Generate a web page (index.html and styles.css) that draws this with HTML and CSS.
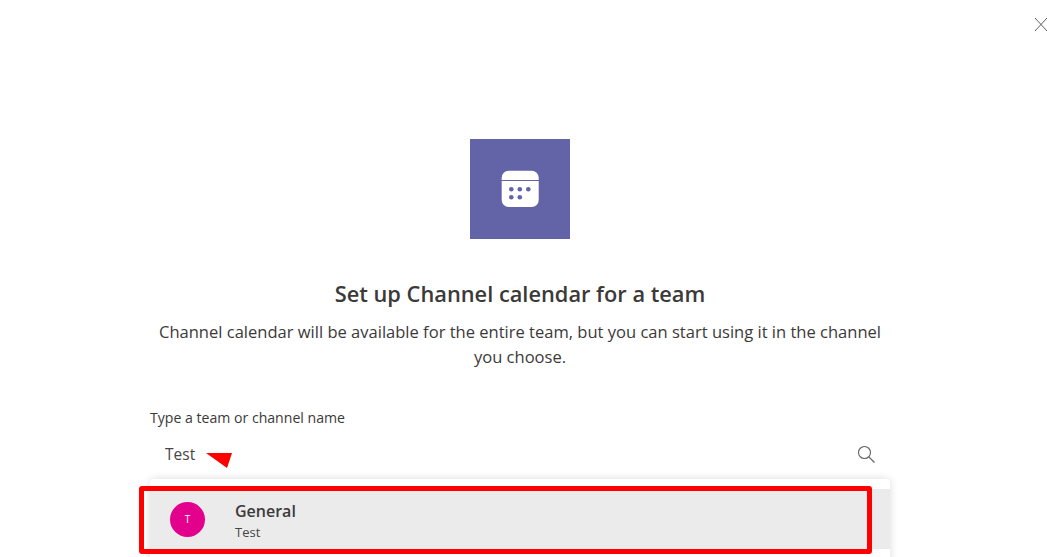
FILE: index.html
```html
<!DOCTYPE html>
<html lang="en">
<head>
<meta charset="utf-8">
<title>Set up Channel calendar</title>
<link rel="stylesheet" href="styles.css">
</head>
<body>
<div class="dialog">
  <svg class="close" viewBox="0 0 14 15" width="14" height="15"><path d="M1 1l12 13M13 1L1 14" fill="none" stroke="#616161" stroke-width="1"/></svg>
  <div class="app-icon">
    <svg viewBox="0 0 38 38" width="38" height="38">
      <path fill="#fff" d="M.7 11h37v19a7 7 0 0 1-7 7h-23a7 7 0 0 1-7-7zM7.700 .7h23a7 7 0 0 1 7 7V10H.7V7.700a7 7 0 0 1 7-7z"/>
      <g fill="#6264a7"><circle cx="10.300" cy="19.300" r="2.300"/><circle cx="18.800" cy="19.300" r="2.300"/><circle cx="27.300" cy="19.300" r="2.300"/><circle cx="10.300" cy="27.300" r="2.300"/><circle cx="18.800" cy="27.300" r="2.300"/></g>
    </svg>
  </div>
  <h1 class="title">Set up Channel calendar for a team</h1>
  <p class="desc">Channel calendar will be available for the entire team, but you can start using it in the channel you choose.</p>
  <div class="picker">
    <label class="label">Type a team or channel name</label>
    <div class="input">
      <span>Test</span>
      <svg class="search" viewBox="0 0 18 18" width="18" height="18"><circle cx="7.500" cy="7.500" r="6" fill="none" stroke="#616161" stroke-width="1.100"/><path d="M11.800 11.800l5.700 5.700" stroke="#616161" stroke-width="1.200"/></svg>
    </div>
    <div class="menu">
      <div class="option">
        <span class="avatar">T</span>
        <div class="option-text"><div class="name">General</div><div class="team">Test</div></div>
      </div>
    </div>
    <svg class="arrow" viewBox="0 0 26 16" width="26" height="16"><path d="M0 1H26L21 16z" fill="#fe0000"/></svg>
    <div class="highlight"></div>
  </div>
</div>
</body>
</html>
```
FILE: styles.css
```css
html, body { margin: 0; height: 557px; overflow: hidden; background: #fff; }
body { font-family: "Open Sans", "Noto Sans", sans-serif; color: #252423; }
.dialog { position: relative; height: 557px; padding-top: 139px; box-sizing: border-box; display: flex; flex-direction: column; align-items: center; padding-right: 7px; }
.close { position: absolute; top: 17px; right: -1px; }
.app-icon { flex: none; width: 100px; height: 100px; background: #6264a7; display: flex; align-items: center; justify-content: center; }
.title { margin: 40px 0 0; font-size: 21.800px; line-height: 30px; font-weight: 600; color: #3b3a39; }
.desc { margin: 10px 0 0; width: 740px; text-align: center; font-size: 16.550px; line-height: 25px; color: #3b3a39; }
.picker { flex: none; position: relative; width: 740px; margin-top: 39px; }
.label { display: block; font-size: 14.100px; line-height: 20px; color: #3b3a39; }
.input { display: flex; justify-content: space-between; align-items: center; height: 30px; margin-top: 11px; padding: 0 15px 0 15px; font-size: 15.500px; color: #484644; }
.menu { margin-top: 10px; background: #fff; border-radius: 4px 4px 0 0; box-shadow: 0 0 8px rgba(0,0,0,.14); padding-top: 10px; height: 80px; }
.option { display: flex; align-items: center; height: 60px; background: #ebebeb; padding-left: 20px; }
.avatar { width: 35px; height: 35px; border-radius: 50%; background: #e3008c; color: #fff; font-size: 10px; display: flex; align-items: center; justify-content: center; }
.option-text { margin-left: 30px; padding-top: 4px; }
.name { font-size: 16px; line-height: 22px; font-weight: 600; color: #3b3a39; }
.team { font-size: 13px; line-height: 20px; color: #484644; }
.arrow { position: absolute; left: 56px; top: 44px; }
.highlight { position: absolute; left: -11px; top: 78px; width: 733px; height: 68px; box-sizing: border-box; border: 5px solid #fe0000; border-radius: 3px; }
```
